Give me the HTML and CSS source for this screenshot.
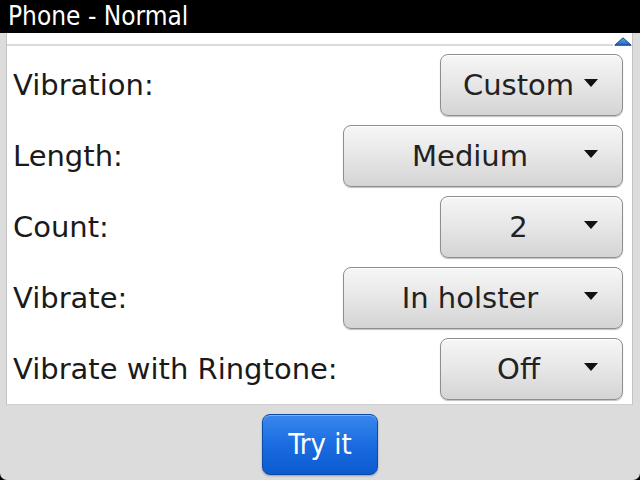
FILE: index.html
```html
<!DOCTYPE html>
<html>
<head>
<meta charset="utf-8">
<link rel="stylesheet" href="styles.css">
</head>
<body>
<div class="screen">
  <div class="titlebar">Phone - Normal</div>
  <div class="panel">
    <svg class="scroll-up" width="18" height="9" viewBox="0 0 18 9">
      <defs>
        <linearGradient id="sg" x1="0" y1="0" x2="0" y2="1">
          <stop offset="0" stop-color="#5fa8f0"/>
          <stop offset="1" stop-color="#1565c8"/>
        </linearGradient>
      </defs>
      <polygon points="9,0.8 17.2,8.2 0.8,8.2" fill="url(#sg)" stroke="#1d3f73" stroke-width="1"/>
    </svg>
    <div class="topline"></div>
    <div class="rows">
      <div class="row">
        <span class="label">Vibration:</span>
        <div class="choice short"><span class="value">Custom</span><span class="arrow"><svg width="14" height="8" viewBox="0 0 14 8"><polygon points="0,0 14,0 7,8" fill="#111"/></svg></span></div>
      </div>
      <div class="row">
        <span class="label">Length:</span>
        <div class="choice long"><span class="value">Medium</span><span class="arrow"><svg width="14" height="8" viewBox="0 0 14 8"><polygon points="0,0 14,0 7,8" fill="#111"/></svg></span></div>
      </div>
      <div class="row">
        <span class="label">Count:</span>
        <div class="choice short"><span class="value">2</span><span class="arrow"><svg width="14" height="8" viewBox="0 0 14 8"><polygon points="0,0 14,0 7,8" fill="#111"/></svg></span></div>
      </div>
      <div class="row">
        <span class="label">Vibrate:</span>
        <div class="choice long"><span class="value">In holster</span><span class="arrow"><svg width="14" height="8" viewBox="0 0 14 8"><polygon points="0,0 14,0 7,8" fill="#111"/></svg></span></div>
      </div>
      <div class="row">
        <span class="label">Vibrate with Ringtone:</span>
        <div class="choice short"><span class="value">Off</span><span class="arrow"><svg width="14" height="8" viewBox="0 0 14 8"><polygon points="0,0 14,0 7,8" fill="#111"/></svg></span></div>
      </div>
    </div>
  </div>
  <div class="footer">
    <div class="try">Try it</div>
  </div>
</div>
</body>
</html>
```

FILE: styles.css
```css
html, body {
  margin: 0;
  padding: 0;
  background: #000;
}

.screen {
  width: 640px;
  height: 480px;
  display: flex;
  flex-direction: column;
  background: #dcdcdc;
  border-radius: 0 0 7px 7px;
  overflow: hidden;
  font-family: "DejaVu Sans", sans-serif;
}

.titlebar {
  height: 33px;
  flex: none;
  background: #000;
  color: #fff;
  font-family: "DejaVu Sans Condensed", "DejaVu Sans", sans-serif;
  font-stretch: condensed;
  font-size: 26px;
  line-height: 33px;
  padding-left: 8px;
  box-sizing: border-box;
  white-space: nowrap;
}

.panel {
  position: relative;
  flex: none;
  height: 372px;
  margin: 0 7px 0 6px;
  background: #fff;
  border-left: 1px solid #c4c4c4;
  border-right: 1px solid #c4c4c4;
  border-bottom: 1px solid #cfcfcf;
  box-sizing: border-box;
}

.scroll-up {
  position: absolute;
  top: 4px;
  right: 0;
  display: block;
}

.topline {
  height: 2px;
  margin: 11px 19px 0 0;
  background: #dadada;
}

.rows {
  display: flex;
  flex-direction: column;
  gap: 9px;
  margin-top: 8px;
}

.row {
  height: 62px;
  display: flex;
  align-items: center;
  justify-content: space-between;
  padding: 0 9px 0 6px;
}

.label {
  font-size: 29px;
  color: #1a1a1a;
  white-space: nowrap;
}

.choice {
  height: 62px;
  box-sizing: border-box;
  display: flex;
  align-items: center;
  padding: 0 19px 0 17px;
  border: 1px solid #8e8e8e;
  border-radius: 8px;
  background: linear-gradient(#f6f6f6 0%, #e8e8e8 45%, #d4d4d4 100%);
  box-shadow: inset 0 1px 0 #ffffff, 0 1px 1px rgba(0, 0, 0, 0.25);
}

.short {
  width: 183px;
}

.long {
  width: 280px;
}

.value {
  flex: 1;
  text-align: center;
  font-size: 29px;
  color: #222;
  white-space: nowrap;
}

.arrow {
  width: 24px;
  display: flex;
  justify-content: center;
  align-items: center;
  margin-top: -4px;
}

.arrow svg {
  display: block;
}

.footer {
  flex: 1;
  display: flex;
  justify-content: center;
  padding-top: 9px;
}

.try {
  width: 116px;
  height: 61px;
  box-sizing: border-box;
  display: flex;
  align-items: center;
  justify-content: center;
  border: 1px solid #0a4aa8;
  border-radius: 8px;
  background: linear-gradient(#3a88ee 0%, #1a6ce0 50%, #0c5ad0 100%);
  box-shadow: inset 0 1px 0 rgba(255, 255, 255, 0.35), 0 1px 2px rgba(0, 0, 0, 0.3);
  color: #fff;
  font-family: "DejaVu Sans Condensed", "DejaVu Sans", sans-serif;
  font-stretch: condensed;
  font-size: 29px;
  padding-bottom: 2px;
}
```
